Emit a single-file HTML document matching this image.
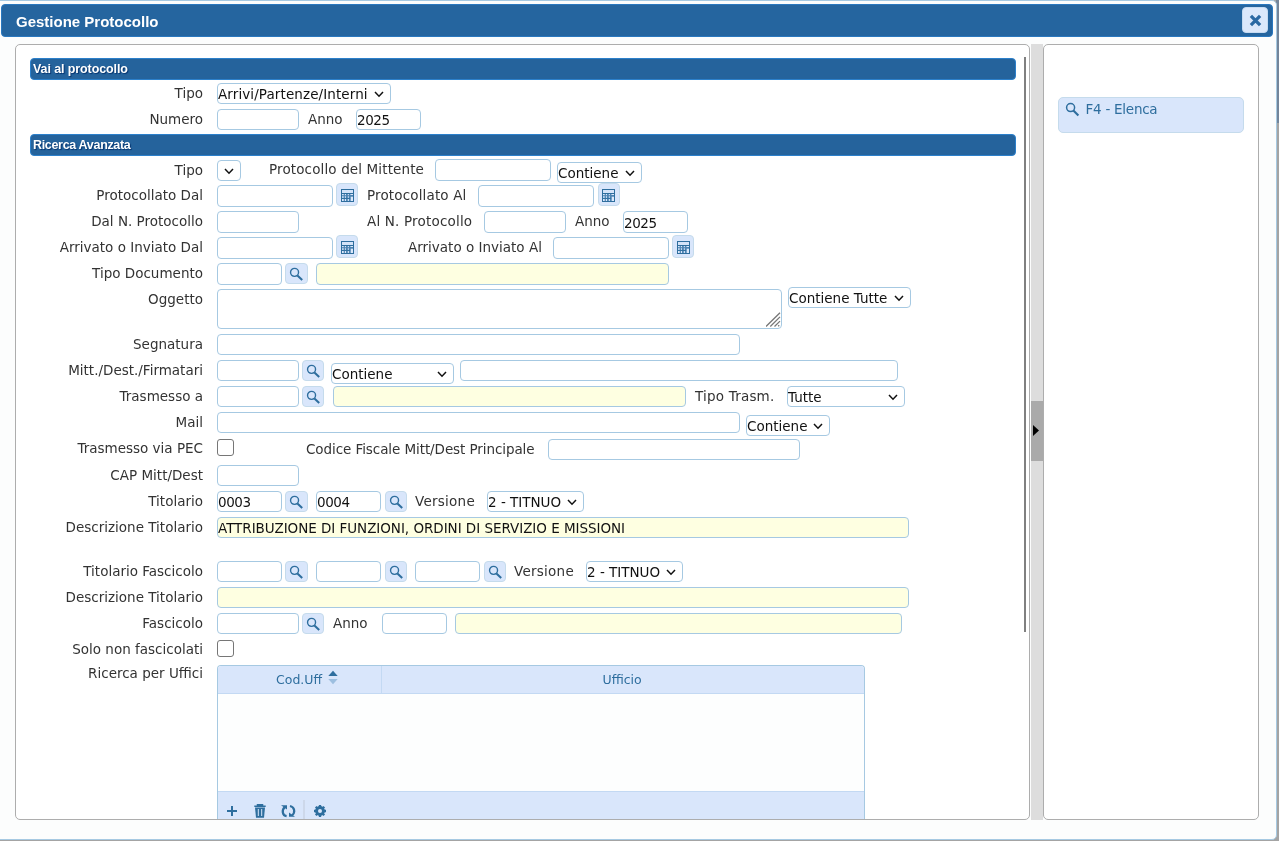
<!DOCTYPE html>
<html lang="it">
<head>
<meta charset="utf-8">
<title>Gestione Protocollo</title>
<style>
html,body{margin:0;padding:0;}
body{will-change:transform;width:1279px;height:841px;overflow:hidden;background:#a4a4a4;position:relative;
  font-family:"DejaVu Sans","Liberation Sans",sans-serif;font-size:13.5px;color:#333;}
div,span{box-sizing:border-box;}
.abs,.lbl,.t,.in,.sel,.btn,.hdr{position:absolute;white-space:nowrap;}
#dlg{position:absolute;left:-1px;top:0;width:1278px;height:840px;background:#fcfdfd;border:1px solid #a6c9e2;border-radius:0 5px 5px 0;}
#title{position:absolute;left:1px;top:4px;width:1272px;height:33px;background:#25659f;border:1px solid #2a78bf;border-radius:4px;}
#title b{position:absolute;left:14px;top:1px;line-height:31px;color:#fff;font-family:"Liberation Sans",sans-serif;font-size:15px;font-weight:bold;}
#close{position:absolute;left:1242px;top:7px;width:26px;height:26px;background:#dbe8fb;border:1px solid #c5dbf2;border-radius:4px;}
.panel{position:absolute;border:1px solid #adadad;border-radius:5px;background:#fff;}
.hdr{left:30px;width:986px;height:22px;background:#25639c;border:1px solid #2c80cb;border-radius:4px;color:#fff;
  font-family:"Liberation Sans",sans-serif;font-weight:bold;font-size:12.5px;line-height:20px;padding-left:2px;letter-spacing:-0.1px;text-shadow:1px 1px 1px rgba(0,45,105,0.9);}
.lbl{left:0;width:203px;text-align:right;height:21px;line-height:21px;}
.t{height:21px;line-height:21px;}
.in{height:21px;border:1px solid #a6c9e2;border-radius:4px;background:#fff;line-height:19px;padding:1px 0 0 0;color:#111;font-size:13.5px;}
.y{background:#feffe1;}
.d{letter-spacing:-0.45px;}
.sel{height:21px;border:1px solid #a6c9e2;border-radius:4px;background:#fff;line-height:19px;padding:1px 0 0 0;color:#111;}
.sel svg{position:absolute;right:6px;top:7px;}
.btn{background:#d9e6fb;border:1px solid #c5dbec;border-radius:4px;}
.btn svg{position:absolute;}
.cb{position:absolute;width:17px;height:17px;border:1px solid #767676;border-radius:3px;background:#fff;}
.blue{color:#2e6e9e;}
</style>
</head>
<body>
<div class="abs" style="left:1276px;top:0;width:3px;height:123px;background:#73859a;"></div>
<div id="dlg"></div>
<div id="title"><b>Gestione Protocollo</b></div>
<div id="close"></div>

<div class="panel" style="left:15px;top:44px;width:1015px;height:776px;"></div>
<div class="abs" style="left:1031px;top:44px;width:12px;height:776px;background:#ddd;"></div>
<div class="abs" style="left:1031px;top:401px;width:12px;height:60px;background:#aaa;"></div>
<div class="panel" style="left:1043px;top:44px;width:216px;height:776px;"></div>
<div class="abs" style="left:1024px;top:57px;width:2px;height:575px;background:#808080;"></div>

<div class="hdr" style="top:58px;">Vai al protocollo</div>
<div class="hdr" style="top:134px;letter-spacing:-0.32px;">Ricerca Avanzata</div>

<!--ROWS-->
<div class="lbl" style="top:83px">Tipo</div>
<div class="sel" style="left:217px;top:83px;width:174px"><span style="letter-spacing:0.1px">Arrivi/Partenze/Interni</span><svg width="10" height="7" viewBox="0 0 10 7"><polyline points="1,1 5,5.2 9,1" fill="none" stroke="#111" stroke-width="1.5"/></svg></div>
<div class="lbl" style="top:109px">Numero</div>
<div class="in" style="left:217px;top:109px;width:82px;"></div>
<div class="t" style="left:308px;top:109px">Anno</div>
<div class="in d" style="left:356px;top:109px;width:65px;">2025</div>
<div class="lbl" style="top:160px">Tipo</div>
<div class="sel" style="left:217px;top:160px;width:24px"><svg width="10" height="7" viewBox="0 0 10 7"><polyline points="1,1 5,5.2 9,1" fill="none" stroke="#111" stroke-width="1.5"/></svg></div>
<div class="t" style="left:269px;top:159px"><span style="letter-spacing:0.13px">Protocollo del Mittente</span></div>
<div class="in" style="left:435px;top:159px;width:116px;height:22px;"></div>
<div class="sel" style="left:557px;top:162px;width:85px">Contiene<svg width="10" height="7" viewBox="0 0 10 7"><polyline points="1,1 5,5.2 9,1" fill="none" stroke="#111" stroke-width="1.5"/></svg></div>
<div class="lbl" style="top:185px">Protocollato Dal</div>
<div class="in" style="left:217px;top:185px;width:116px;height:22px;"></div>
<div class="btn" style="left:336px;top:183px;width:22px;height:23px"><svg width="13" height="13" viewBox="0 0 13 13" style="left:4px;top:5px"><rect width="13" height="13" fill="#2e6e9e"/><rect x="1" y="1" width="11" height="3" fill="#d4e3f8"/><rect x="1" y="5" width="11" height="7" fill="#4d84b3"/><path d="M1 4.5h11M1 9.3h8.6" stroke="#2e6e9e" stroke-width="1" fill="none"/><g fill="#dbe8fb"><rect x="1" y="5" width="1.7" height="1.2"/><rect x="3.9" y="5" width="1.1" height="1.2"/><rect x="6.8" y="5" width="1.1" height="1.2"/><rect x="9.4" y="5" width="2.6" height="1"/><rect x="1" y="7.3" width="1.7" height="1.5"/><rect x="3.9" y="7.3" width="1.1" height="1.5"/><rect x="6.8" y="7.3" width="1.1" height="1.5"/><rect x="9.7" y="7.7" width="2.3" height="4.3"/><rect x="1" y="10" width="1.7" height="2"/><rect x="3.9" y="10" width="1.1" height="2"/><rect x="6.8" y="10" width="1.1" height="2"/></g></svg></div>
<div class="t" style="left:367px;top:185px"><span style="letter-spacing:0.15px">Protocollato Al</span></div>
<div class="in" style="left:478px;top:185px;width:116px;height:22px;"></div>
<div class="btn" style="left:598px;top:183px;width:22px;height:23px"><svg width="13" height="13" viewBox="0 0 13 13" style="left:3px;top:5px"><rect width="13" height="13" fill="#2e6e9e"/><rect x="1" y="1" width="11" height="3" fill="#d4e3f8"/><rect x="1" y="5" width="11" height="7" fill="#4d84b3"/><path d="M1 4.5h11M1 9.3h8.6" stroke="#2e6e9e" stroke-width="1" fill="none"/><g fill="#dbe8fb"><rect x="1" y="5" width="1.7" height="1.2"/><rect x="3.9" y="5" width="1.1" height="1.2"/><rect x="6.8" y="5" width="1.1" height="1.2"/><rect x="9.4" y="5" width="2.6" height="1"/><rect x="1" y="7.3" width="1.7" height="1.5"/><rect x="3.9" y="7.3" width="1.1" height="1.5"/><rect x="6.8" y="7.3" width="1.1" height="1.5"/><rect x="9.7" y="7.7" width="2.3" height="4.3"/><rect x="1" y="10" width="1.7" height="2"/><rect x="3.9" y="10" width="1.1" height="2"/><rect x="6.8" y="10" width="1.1" height="2"/></g></svg></div>
<div class="lbl" style="top:211px">Dal N. Protocollo</div>
<div class="in" style="left:217px;top:211px;width:82px;height:22px;"></div>
<div class="t" style="left:367px;top:211px"><span style="letter-spacing:0.18px">Al N. Protocollo</span></div>
<div class="in" style="left:484px;top:211px;width:82px;height:22px;"></div>
<div class="t" style="left:575px;top:211px">Anno</div>
<div class="in d" style="left:623px;top:211px;width:65px;height:22px;"><span style="position:relative;top:1px">2025</span></div>
<div class="lbl" style="top:237px">Arrivato o Inviato Dal</div>
<div class="in" style="left:217px;top:237px;width:116px;height:22px;"></div>
<div class="btn" style="left:336px;top:235px;width:22px;height:23px"><svg width="13" height="13" viewBox="0 0 13 13" style="left:4px;top:5px"><rect width="13" height="13" fill="#2e6e9e"/><rect x="1" y="1" width="11" height="3" fill="#d4e3f8"/><rect x="1" y="5" width="11" height="7" fill="#4d84b3"/><path d="M1 4.5h11M1 9.3h8.6" stroke="#2e6e9e" stroke-width="1" fill="none"/><g fill="#dbe8fb"><rect x="1" y="5" width="1.7" height="1.2"/><rect x="3.9" y="5" width="1.1" height="1.2"/><rect x="6.8" y="5" width="1.1" height="1.2"/><rect x="9.4" y="5" width="2.6" height="1"/><rect x="1" y="7.3" width="1.7" height="1.5"/><rect x="3.9" y="7.3" width="1.1" height="1.5"/><rect x="6.8" y="7.3" width="1.1" height="1.5"/><rect x="9.7" y="7.7" width="2.3" height="4.3"/><rect x="1" y="10" width="1.7" height="2"/><rect x="3.9" y="10" width="1.1" height="2"/><rect x="6.8" y="10" width="1.1" height="2"/></g></svg></div>
<div class="t" style="left:408px;top:237px">Arrivato o Inviato Al</div>
<div class="in" style="left:553px;top:237px;width:116px;height:22px;"></div>
<div class="btn" style="left:672px;top:235px;width:22px;height:23px"><svg width="13" height="13" viewBox="0 0 13 13" style="left:4px;top:5px"><rect width="13" height="13" fill="#2e6e9e"/><rect x="1" y="1" width="11" height="3" fill="#d4e3f8"/><rect x="1" y="5" width="11" height="7" fill="#4d84b3"/><path d="M1 4.5h11M1 9.3h8.6" stroke="#2e6e9e" stroke-width="1" fill="none"/><g fill="#dbe8fb"><rect x="1" y="5" width="1.7" height="1.2"/><rect x="3.9" y="5" width="1.1" height="1.2"/><rect x="6.8" y="5" width="1.1" height="1.2"/><rect x="9.4" y="5" width="2.6" height="1"/><rect x="1" y="7.3" width="1.7" height="1.5"/><rect x="3.9" y="7.3" width="1.1" height="1.5"/><rect x="6.8" y="7.3" width="1.1" height="1.5"/><rect x="9.7" y="7.7" width="2.3" height="4.3"/><rect x="1" y="10" width="1.7" height="2"/><rect x="3.9" y="10" width="1.1" height="2"/><rect x="6.8" y="10" width="1.1" height="2"/></g></svg></div>
<div class="lbl" style="top:263px">Tipo Documento</div>
<div class="in" style="left:217px;top:263px;width:65px;height:22px;"></div>
<div class="btn" style="left:285px;top:263px;width:23px;height:21px"><svg width="16" height="16" viewBox="0 0 16 16" style="left:3px;top:2px"><circle cx="5.55" cy="6.35" r="4" fill="none" stroke="#2e6e9e" stroke-width="1.4"/><line x1="8.4" y1="9.4" x2="13.2" y2="14" stroke="#2e6e9e" stroke-width="2.1"/></svg></div>
<div class="in y" style="left:316px;top:263px;width:353px;height:22px;"></div>
<div class="lbl" style="top:289px">Oggetto</div>
<div class="in" style="left:217px;top:289px;width:565px;height:40px;"></div>
<div class="sel" style="left:788px;top:287px;width:123px">Contiene Tutte<svg width="10" height="7" viewBox="0 0 10 7"><polyline points="1,1 5,5.2 9,1" fill="none" stroke="#111" stroke-width="1.5"/></svg></div>
<svg class="abs" style="left:766px;top:312px" width="15" height="15" viewBox="0 0 15 15"><path d="M0 14.5L14 0.8M4.3 14.5L14 4.9M8.5 14.5L14 9.1M12.2 14.3L13.2 13.3" stroke="#777" stroke-width="1.3" fill="none"/></svg>
<div class="lbl" style="top:334px">Segnatura</div>
<div class="in" style="left:217px;top:334px;width:523px;"></div>
<div class="lbl" style="top:360px">Mitt./Dest./Firmatari</div>
<div class="in" style="left:217px;top:360px;width:82px;"></div>
<div class="btn" style="left:302px;top:360px;width:22px;height:21px"><svg width="16" height="16" viewBox="0 0 16 16" style="left:2.6px;top:2px"><circle cx="5.55" cy="6.35" r="4" fill="none" stroke="#2e6e9e" stroke-width="1.4"/><line x1="8.4" y1="9.4" x2="13.2" y2="14" stroke="#2e6e9e" stroke-width="2.1"/></svg></div>
<div class="sel" style="left:331px;top:363px;width:123px">Contiene<svg width="10" height="7" viewBox="0 0 10 7"><polyline points="1,1 5,5.2 9,1" fill="none" stroke="#111" stroke-width="1.5"/></svg></div>
<div class="in" style="left:460px;top:360px;width:438px;"></div>
<div class="lbl" style="top:386px">Trasmesso a</div>
<div class="in" style="left:217px;top:386px;width:82px;"></div>
<div class="btn" style="left:302px;top:386px;width:22px;height:21px"><svg width="16" height="16" viewBox="0 0 16 16" style="left:2.6px;top:2px"><circle cx="5.55" cy="6.35" r="4" fill="none" stroke="#2e6e9e" stroke-width="1.4"/><line x1="8.4" y1="9.4" x2="13.2" y2="14" stroke="#2e6e9e" stroke-width="2.1"/></svg></div>
<div class="in y" style="left:333px;top:386px;width:353px;"></div>
<div class="t" style="left:695px;top:386px"><span style="letter-spacing:0.2px">Tipo Trasm.</span></div>
<div class="sel" style="left:787px;top:386px;width:118px">Tutte<svg width="10" height="7" viewBox="0 0 10 7"><polyline points="1,1 5,5.2 9,1" fill="none" stroke="#111" stroke-width="1.5"/></svg></div>
<div class="lbl" style="top:412px">Mail</div>
<div class="in" style="left:217px;top:412px;width:523px;"></div>
<div class="sel" style="left:746px;top:415px;width:84px">Contiene<svg width="10" height="7" viewBox="0 0 10 7"><polyline points="1,1 5,5.2 9,1" fill="none" stroke="#111" stroke-width="1.5"/></svg></div>
<div class="lbl" style="top:438px">Trasmesso via PEC</div>
<div class="cb" style="left:217px;top:439px"></div>
<div class="t" style="left:306px;top:439px"><span style="letter-spacing:-0.08px">Codice Fiscale Mitt/Dest Principale</span></div>
<div class="in" style="left:548px;top:439px;width:252px;"></div>
<div class="lbl" style="top:465px">CAP Mitt/Dest</div>
<div class="in" style="left:217px;top:465px;width:82px;"></div>
<div class="lbl" style="top:491px">Titolario</div>
<div class="in d" style="left:217px;top:491px;width:65px;">0003</div>
<div class="btn" style="left:285px;top:491px;width:23px;height:21px"><svg width="16" height="16" viewBox="0 0 16 16" style="left:3px;top:2px"><circle cx="5.55" cy="6.35" r="4" fill="none" stroke="#2e6e9e" stroke-width="1.4"/><line x1="8.4" y1="9.4" x2="13.2" y2="14" stroke="#2e6e9e" stroke-width="2.1"/></svg></div>
<div class="in d" style="left:316px;top:491px;width:65px;">0004</div>
<div class="btn" style="left:385px;top:491px;width:22px;height:21px"><svg width="16" height="16" viewBox="0 0 16 16" style="left:2.6px;top:2px"><circle cx="5.55" cy="6.35" r="4" fill="none" stroke="#2e6e9e" stroke-width="1.4"/><line x1="8.4" y1="9.4" x2="13.2" y2="14" stroke="#2e6e9e" stroke-width="2.1"/></svg></div>
<div class="t" style="left:415px;top:491px"><span style="letter-spacing:0.25px">Versione</span></div>
<div class="sel" style="left:487px;top:491px;width:97px">2 - TITNUO<svg width="10" height="7" viewBox="0 0 10 7"><polyline points="1,1 5,5.2 9,1" fill="none" stroke="#111" stroke-width="1.5"/></svg></div>
<div class="lbl" style="top:517px">Descrizione Titolario</div>
<div class="in y" style="left:217px;top:517px;width:692px;"><span style="letter-spacing:-0.04px">ATTRIBUZIONE DI FUNZIONI, ORDINI DI SERVIZIO E MISSIONI</span></div>
<div class="lbl" style="top:561px">Titolario Fascicolo</div>
<div class="in" style="left:217px;top:561px;width:65px;"></div>
<div class="btn" style="left:285px;top:561px;width:23px;height:21px"><svg width="16" height="16" viewBox="0 0 16 16" style="left:3px;top:2px"><circle cx="5.55" cy="6.35" r="4" fill="none" stroke="#2e6e9e" stroke-width="1.4"/><line x1="8.4" y1="9.4" x2="13.2" y2="14" stroke="#2e6e9e" stroke-width="2.1"/></svg></div>
<div class="in" style="left:316px;top:561px;width:65px;"></div>
<div class="btn" style="left:385px;top:561px;width:22px;height:21px"><svg width="16" height="16" viewBox="0 0 16 16" style="left:2.6px;top:2px"><circle cx="5.55" cy="6.35" r="4" fill="none" stroke="#2e6e9e" stroke-width="1.4"/><line x1="8.4" y1="9.4" x2="13.2" y2="14" stroke="#2e6e9e" stroke-width="2.1"/></svg></div>
<div class="in" style="left:415px;top:561px;width:65px;"></div>
<div class="btn" style="left:484px;top:561px;width:22px;height:21px"><svg width="16" height="16" viewBox="0 0 16 16" style="left:2.6px;top:2px"><circle cx="5.55" cy="6.35" r="4" fill="none" stroke="#2e6e9e" stroke-width="1.4"/><line x1="8.4" y1="9.4" x2="13.2" y2="14" stroke="#2e6e9e" stroke-width="2.1"/></svg></div>
<div class="t" style="left:514px;top:561px"><span style="letter-spacing:0.25px">Versione</span></div>
<div class="sel" style="left:586px;top:561px;width:97px">2 - TITNUO<svg width="10" height="7" viewBox="0 0 10 7"><polyline points="1,1 5,5.2 9,1" fill="none" stroke="#111" stroke-width="1.5"/></svg></div>
<div class="lbl" style="top:587px">Descrizione Titolario</div>
<div class="in y" style="left:217px;top:587px;width:692px;"></div>
<div class="lbl" style="top:613px">Fascicolo</div>
<div class="in" style="left:217px;top:613px;width:82px;"></div>
<div class="btn" style="left:302px;top:613px;width:22px;height:21px"><svg width="16" height="16" viewBox="0 0 16 16" style="left:2.6px;top:2px"><circle cx="5.55" cy="6.35" r="4" fill="none" stroke="#2e6e9e" stroke-width="1.4"/><line x1="8.4" y1="9.4" x2="13.2" y2="14" stroke="#2e6e9e" stroke-width="2.1"/></svg></div>
<div class="t" style="left:333px;top:613px">Anno</div>
<div class="in" style="left:382px;top:613px;width:65px;"></div>
<div class="in y" style="left:455px;top:613px;width:447px;"></div>
<div class="lbl" style="top:639px">Solo non fascicolati</div>
<div class="cb" style="left:217px;top:640px"></div>
<div class="lbl" style="top:663px">Ricerca per Uffici</div>
<div class="abs" style="left:217px;top:665px;width:648px;height:154px;overflow:hidden;border:1px solid #a6c9e2;border-bottom:0;border-radius:4px 4px 0 0;background:#fdfefe;">
<div class="abs" style="left:0;top:0;width:646px;height:28px;background:#d9e6fb;border-bottom:1px solid #c3d9f3;"></div>
<div class="abs" style="left:163px;top:0;width:1px;height:27px;background:#c3d9f3;"></div>
<div class="abs blue" style="left:58px;top:0;line-height:27px;font-size:12.5px;">Cod.Uff</div>
<svg class="abs" style="left:109.7px;top:4px" width="10" height="15" viewBox="0 0 10 15"><path d="M0.3 6L5 0.7L9.7 6z" fill="#2e6e9e"/><path d="M0.3 9L5 14.2L9.7 9z" fill="#9dbfe0"/></svg>
<div class="abs blue" style="left:384.5px;top:0;line-height:27px;font-size:12.5px;">Ufficio</div>
<div class="abs" style="left:0;top:125px;width:646px;height:30px;background:#d9e6fb;border-top:1px solid #c3d9f3;"></div>
<div class="abs" style="left:85px;top:134px;width:2px;height:20px;background:#cdd8ea;"></div>
</div>
<!--/ROWS-->

<!--STATIC-->
<svg class="abs" style="left:1242px;top:7px" width="26" height="26" viewBox="0 0 26 26"><path d="M8.9 8.9L18.1 18.1M18.1 8.9L8.9 18.1" stroke="#2a69a3" stroke-width="3.3" fill="none"/></svg>
<svg class="abs" style="left:1031px;top:423px" width="12" height="16" viewBox="0 0 12 16"><path d="M2 2L8 7.5L2 13z" fill="#000"/></svg>
<div class="btn" style="left:1058px;top:97px;width:186px;height:36px;border-radius:5px;"></div>
<svg class="abs" style="left:1065px;top:102px" width="16" height="16" viewBox="0 0 16 16"><circle cx="5.6" cy="5.6" r="4" fill="none" stroke="#2e6e9e" stroke-width="1.5"/><line x1="8.4" y1="8.4" x2="13.4" y2="13.4" stroke="#2e6e9e" stroke-width="2.1"/></svg>
<div class="t blue" style="left:1085.5px;top:99px;letter-spacing:-0.25px;">F4 - Elenca</div>
<svg class="abs" style="left:222px;top:800px" width="110" height="19" viewBox="0 0 110 19">
<path d="M10 6v10M5 11h10" stroke="#2e6e9e" stroke-width="2" fill="none"/>
<path d="M32.3 6.3h11.4M35.5 6v-1.2h5V6" stroke="#2e6e9e" stroke-width="1.5" fill="none"/>
<path d="M33 7.6h10l-1 10.2h-8z" fill="#2e6e9e"/>
<path d="M36.3 9v7M39.7 9v7" stroke="#d9e6fb" stroke-width="1" fill="none"/>
<path d="M64.6 16.2C60.3 15.6 59.4 10 62.9 7.2" stroke="#2e6e9e" stroke-width="2.2" fill="none"/>
<path d="M59 5.3h6v4.2z" fill="#2e6e9e"/>
<path d="M68 6C72.7 7 73.6 12.6 70 15.3" stroke="#2e6e9e" stroke-width="2.2" fill="none"/>
<path d="M73 16.7h-6v-4.2z" fill="#2e6e9e"/>
<g transform="translate(98 11)"><circle r="3.6" fill="none" stroke="#2e6e9e" stroke-width="2.6"/><g stroke="#2e6e9e" stroke-width="2.3"><path d="M0 -6v12M-6 0h12M-4.24 -4.24l8.48 8.48M-4.24 4.24l8.48 -8.48"/></g><circle r="2" fill="#d9e6fb"/></g>
</svg>
<!--/STATIC-->
</body>
</html>
